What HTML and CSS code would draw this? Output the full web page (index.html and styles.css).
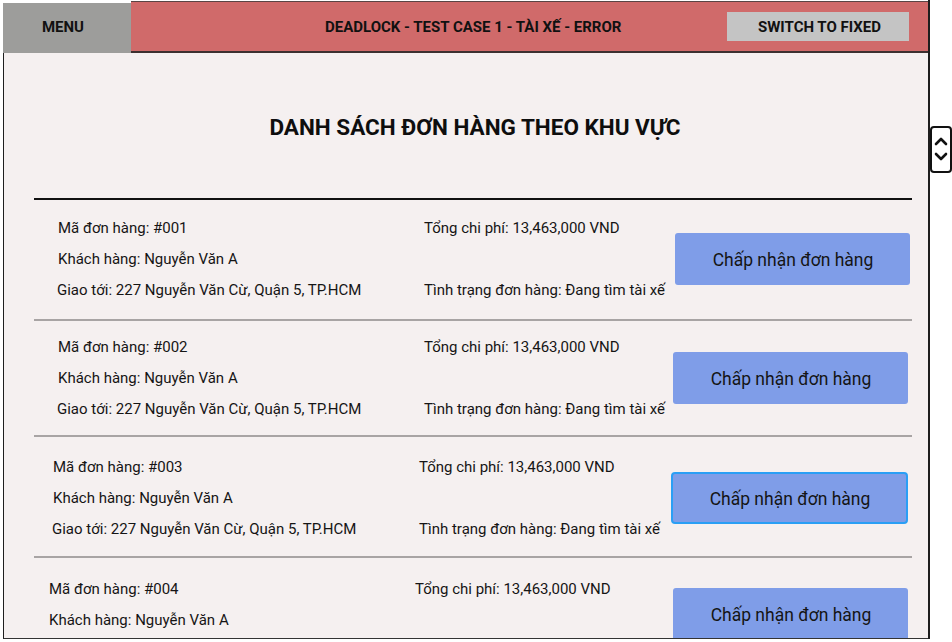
FILE: index.html
```html
<!DOCTYPE html>
<html lang="vi">
<head>
<meta charset="utf-8">
<title>Deadlock - Test case 1</title>
<link rel="stylesheet" href="styles.css">
</head>
<body>
<div class="frame">
  <header class="topbar">
    <div class="menu">MENU</div>
    <div class="bar">
      <div class="bar-title">DEADLOCK - TEST CASE 1 - TÀI XẾ - ERROR</div>
      <button class="switch">SWITCH TO FIXED</button>
    </div>
  </header>
  <main class="content">
    <h1 class="title">DANH SÁCH ĐƠN HÀNG THEO KHU VỰC</h1>
    <div class="rule"></div>
    <div class="list">
      <div class="row row-1">
        <div class="col col-a">
          <div class="line">Mã đơn hàng: #001</div>
          <div class="line">Khách hàng: Nguyễn Văn A</div>
          <div class="line shift">Giao tới: 227 Nguyễn Văn Cừ, Quận 5, TP.HCM</div>
        </div>
        <div class="col col-b">
          <div class="line">Tổng chi phí: 13,463,000 VND</div>
          <div class="line"></div>
          <div class="line">Tình trạng đơn hàng: Đang tìm tài xế</div>
        </div>
        <button class="accept">Chấp nhận đơn hàng</button>
      </div>
      <div class="row row-2">
        <div class="col col-a">
          <div class="line">Mã đơn hàng: #002</div>
          <div class="line">Khách hàng: Nguyễn Văn A</div>
          <div class="line shift">Giao tới: 227 Nguyễn Văn Cừ, Quận 5, TP.HCM</div>
        </div>
        <div class="col col-b">
          <div class="line">Tổng chi phí: 13,463,000 VND</div>
          <div class="line"></div>
          <div class="line">Tình trạng đơn hàng: Đang tìm tài xế</div>
        </div>
        <button class="accept">Chấp nhận đơn hàng</button>
      </div>
      <div class="row row-3">
        <div class="col col-a">
          <div class="line">Mã đơn hàng: #003</div>
          <div class="line">Khách hàng: Nguyễn Văn A</div>
          <div class="line shift">Giao tới: 227 Nguyễn Văn Cừ, Quận 5, TP.HCM</div>
        </div>
        <div class="col col-b">
          <div class="line">Tổng chi phí: 13,463,000 VND</div>
          <div class="line"></div>
          <div class="line">Tình trạng đơn hàng: Đang tìm tài xế</div>
        </div>
        <button class="accept focused">Chấp nhận đơn hàng</button>
      </div>
      <div class="row row-4">
        <div class="col col-a">
          <div class="line">Mã đơn hàng: #004</div>
          <div class="line">Khách hàng: Nguyễn Văn A</div>
        </div>
        <div class="col col-b">
          <div class="line">Tổng chi phí: 13,463,000 VND</div>
        </div>
        <button class="accept">Chấp nhận đơn hàng</button>
      </div>
    </div>
  </main>
</div>
<div class="scroller">
  <svg width="22" height="46" viewBox="0 0 22 46">
    <path d="M6 18 L11 13 L16 18" fill="none" stroke="#111" stroke-width="2.6" stroke-linecap="round" stroke-linejoin="round"/>
    <path d="M6 28 L11 33 L16 28" fill="none" stroke="#111" stroke-width="2.6" stroke-linecap="round" stroke-linejoin="round"/>
  </svg>
</div>
</body>
</html>
```
FILE: styles.css
```css
html, body {
  margin: 0;
  padding: 0;
  background: #ffffff;
  height: 642px;
  overflow: hidden;
}
body {
  font-family: Roboto, "Noto Sans", "Liberation Sans", sans-serif;
  color: #151515;
  position: relative;
}
.frame {
  margin-left: 3px;
  width: 925px;
  height: 639px;
  border-right: 2px solid #1e1e1e;
  display: flex;
  flex-direction: column;
}
.topbar {
  display: flex;
  height: 53px;
  flex: none;
}
.menu {
  width: 128px;
  margin-top: 3px;
  background: #9d9d9b;
  display: flex;
  align-items: center;
  justify-content: center;
  font-weight: 700;
  font-size: 15px;
  color: #111;
  padding-bottom: 2px;
  padding-right: 8px;
  box-sizing: border-box;
}
.bar {
  flex: 1;
  margin-top: 1px;
  background: #d06a6a;
  border-top: 1px solid #5a4444;
  border-bottom: 2px solid #3d3030;
  display: flex;
  align-items: center;
}
.bar-title {
  margin-left: 194px;
  font-weight: 700;
  font-size: 15px;
  color: #111;
  padding-top: 1px;
}
.switch {
  margin-left: auto;
  margin-right: 19px;
  width: 182px;
  height: 29px;
  background: #c4c4c4;
  border: none;
  font-family: inherit;
  font-weight: 700;
  font-size: 15px;
  color: #111;
  padding: 0 0 0 3px;
}
.content {
  flex: 1;
  background: #f5f0f0;
  border-left: 1px solid #1e1e1e;
  border-bottom: 1px solid #333;
  overflow: hidden;
}
.title {
  margin: 0;
  padding-top: 59px;
  height: 30px;
  line-height: 30px;
  text-align: center;
  font-size: 22.5px;
  font-weight: 700;
  color: #0e0e0e;
  padding-left: 18px;
}
.rule {
  margin: 56px 16px 0 30px;
  height: 2px;
  background: #111;
}
.list {
  margin: 0 16px 0 30px;
}
.row {
  display: flex;
  align-items: flex-start;
  border-bottom: 2px solid #a8a4a4;
  font-size: 15px;
}
.col {
  display: flex;
  flex-direction: column;
}
.line {
  height: 31px;
  line-height: 31px;
  white-space: nowrap;
}
.line.shift {
  margin-left: -1px;
}
.col-a {
  width: 366px;
}
.col-b {
  flex: 1;
}
.accept {
  flex: none;
  width: 235px;
  height: 52px;
  background: #7f9de8;
  border: none;
  border-radius: 3px;
  font-family: inherit;
  font-size: 17.5px;
  color: #151515;
  padding: 2px 0 0 1px;
}
.accept.focused {
  width: 237px;
  border: 2px solid #2a9ff5;
  border-radius: 4px;
}
.row-1 {
  height: 119px;
  padding-left: 24px;
}
.row-1 .col { padding-top: 13px; }
.row-1 .accept { margin-top: 33px; margin-right: 2px; }
.row-2 {
  height: 114px;
  padding-left: 24px;
}
.row-2 .col { padding-top: 11px; }
.row-2 .accept { margin-top: 31px; margin-right: 4px; }
.row-3 {
  height: 119px;
  padding-left: 19px;
}
.row-3 .col { padding-top: 15px; }
.row-3 .accept { margin-top: 35px; margin-right: 4px; }
.row-4 {
  height: 100px;
  padding-left: 15px;
  border-bottom: none;
}
.row-4 .col { padding-top: 16px; }
.row-4 .accept { margin-top: 30px; margin-right: 4px; }
.scroller {
  position: absolute;
  left: 930px;
  top: 126px;
  width: 22px;
  height: 47px;
  box-sizing: border-box;
  border: 2px solid #111;
  border-radius: 4px;
  background: #fff;
  overflow: hidden;
}
.scroller svg {
  position: absolute;
  left: -2px;
  top: -2px;
}
```
